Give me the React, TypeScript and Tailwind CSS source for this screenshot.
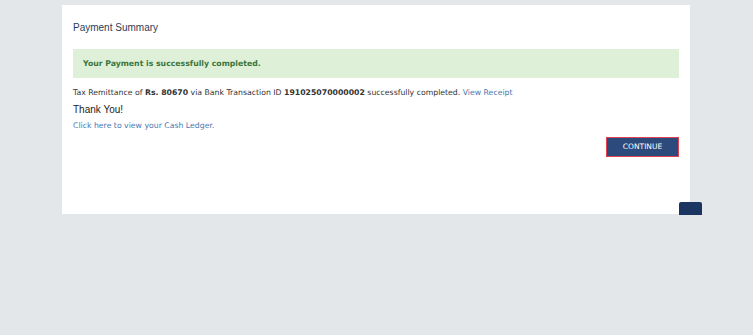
import React from "react";

const verdana = "font-[family-name:'DejaVu_Sans',Verdana,sans-serif]";
const arial = "font-[family-name:'Liberation_Sans',Arial,sans-serif]";

const PaymentSummary = () => {
  return (
    <div className="relative bg-white w-[628px] h-[209px] mt-[5px] ml-[62px] px-[11px] pt-[16px]">
      <h4 className={`${arial} text-[10px] leading-[14px] text-[#2a3d57]`}>
        Payment Summary
      </h4>

      <div className="mt-[14px] bg-[#dff0d8] h-[29px] flex items-center px-[10px]">
        <span className={`${verdana} text-[7.75px] font-bold text-[#3c763d]`}>
          Your Payment is successfully completed.
        </span>
      </div>

      <p className={`${verdana} mt-[10px] text-[7.75px] leading-[10px] text-[#333]`}>
        Tax Remittance of <b>Rs. 80670</b> via Bank Transaction ID{" "}
        <b>191025070000002</b> successfully completed.{" "}
        <a className="text-[#4a78b0]" href="#">
          View Receipt
        </a>
      </p>
      <p className={`${arial} mt-[6px] text-[10px] leading-[12px] text-[#222]`}>
        Thank You!
      </p>
      <p className={`${verdana} mt-[5px] text-[7.75px] leading-[10px] text-[#4a78b0]`}>
        Click here to view your Cash Ledger.
      </p>

      <div className="flex justify-end mt-[6px]">
        <button
          className={`${verdana} w-[73px] h-[20px] bg-[#2c4a7c] border border-[#e0434f] text-white text-[7.5px] font-normal`}
        >
          CONTINUE
        </button>
      </div>

      {/* back to top */}
      <div className="absolute left-[617px] top-[197px] w-[23px] h-[13px] rounded-t-[2px] bg-[#1b3563]" />
    </div>
  );
};

export default function App() {
  return (
    <div className="w-[753px] h-[335px] bg-[#e3e7ea] overflow-hidden">
      <PaymentSummary />
    </div>
  );
}
